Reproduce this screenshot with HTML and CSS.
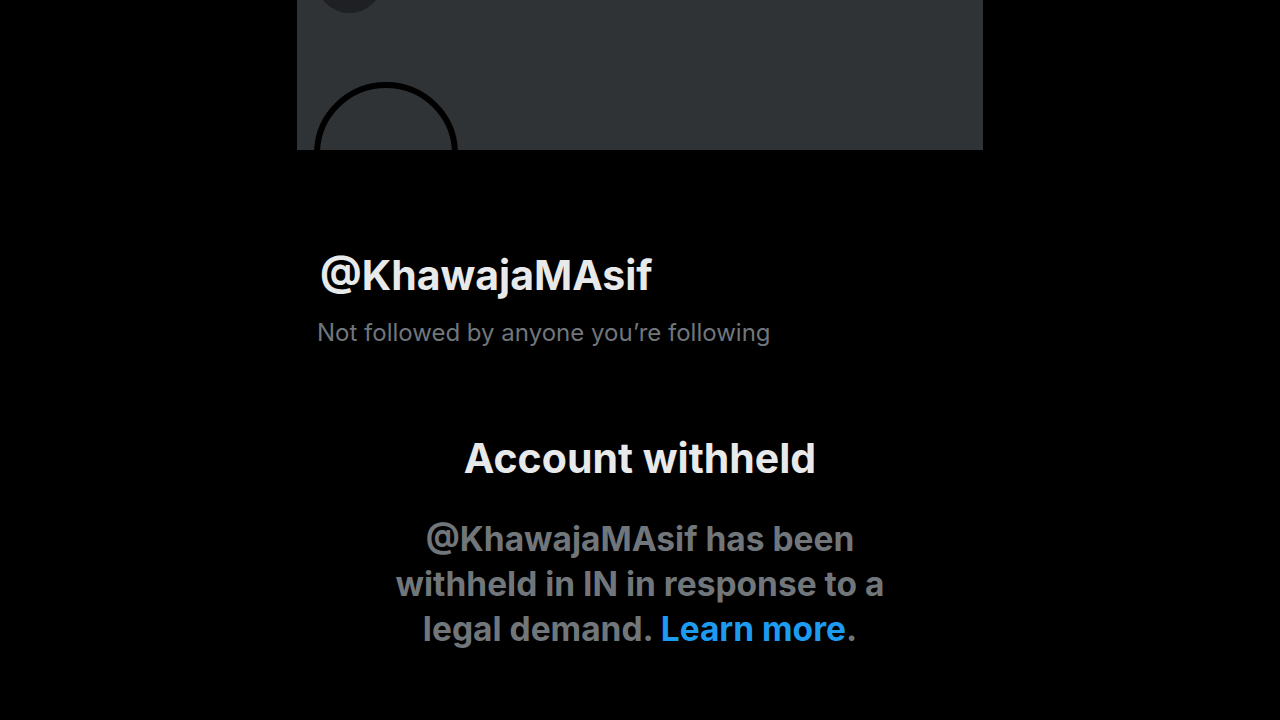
FILE: index.html
```html
<!DOCTYPE html>
<html lang="en">
<head>
    <meta charset="UTF-8">
    <meta name="viewport" content="width=device-width, initial-scale=1.0">
    <title>@KhawajaMAsif</title>
    <link rel="stylesheet" href="styles.css">
</head>
<body>

<div class="profile-column">
    <div class="banner">
        <div class="back-button"></div>
        <div class="avatar"></div>
    </div>

    <div class="profile-info">
        <h1 class="handle">@KhawajaMAsif</h1>
        <p class="followers-note">Not followed by anyone you’re following</p>
    </div>

    <div class="withheld-notice">
        <h2>Account withheld</h2>
        <p>@KhawajaMAsif has been withheld in IN in response to a legal demand. <a href="#">Learn more</a>.</p>
    </div>
</div>

</body>
</html>
```

FILE: styles.css
```css
body {
    font-family: Inter, "Noto Sans", sans-serif;
    background-color: #000;
    margin: 0;
    height: 100vh;
    overflow: hidden;
}
.profile-column {
    width: 686px;
    margin: 0 auto;
}
.banner {
    position: relative;
    height: 150px;
    background-color: #2f3336;
    overflow: hidden;
}
.back-button {
    position: absolute;
    left: 19px;
    top: -54px;
    width: 67px;
    height: 67px;
    border-radius: 50%;
    background-color: #1e2023;
}
.avatar {
    position: absolute;
    left: 17px;
    top: 82px;
    width: 132px;
    height: 132px;
    border: 6px solid #000;
    border-radius: 50%;
    background-color: #2f3336;
}
.profile-info {
    padding: 101px 20px 0;
}
.handle {
    margin: 0;
    color: #e7e9ea;
    font-size: 41px;
    font-weight: 700;
    line-height: 48px;
    padding-left: 3px;
}
.followers-note {
    margin: 20px 0 0;
    color: #71767b;
    font-size: 24px;
    line-height: 28px;
}
.withheld-notice {
    text-align: center;
    padding-top: 86px;
}
.withheld-notice h2 {
    margin: 0;
    color: #e7e9ea;
    font-size: 41px;
    font-weight: 700;
    line-height: 50px;
}
.withheld-notice p {
    width: 540px;
    margin: 34px auto 0;
    color: #71767b;
    font-size: 33.5px;
    font-weight: 700;
    line-height: 45px;
}
.withheld-notice a {
    color: #1d9bf0;
    text-decoration: none;
}
```
